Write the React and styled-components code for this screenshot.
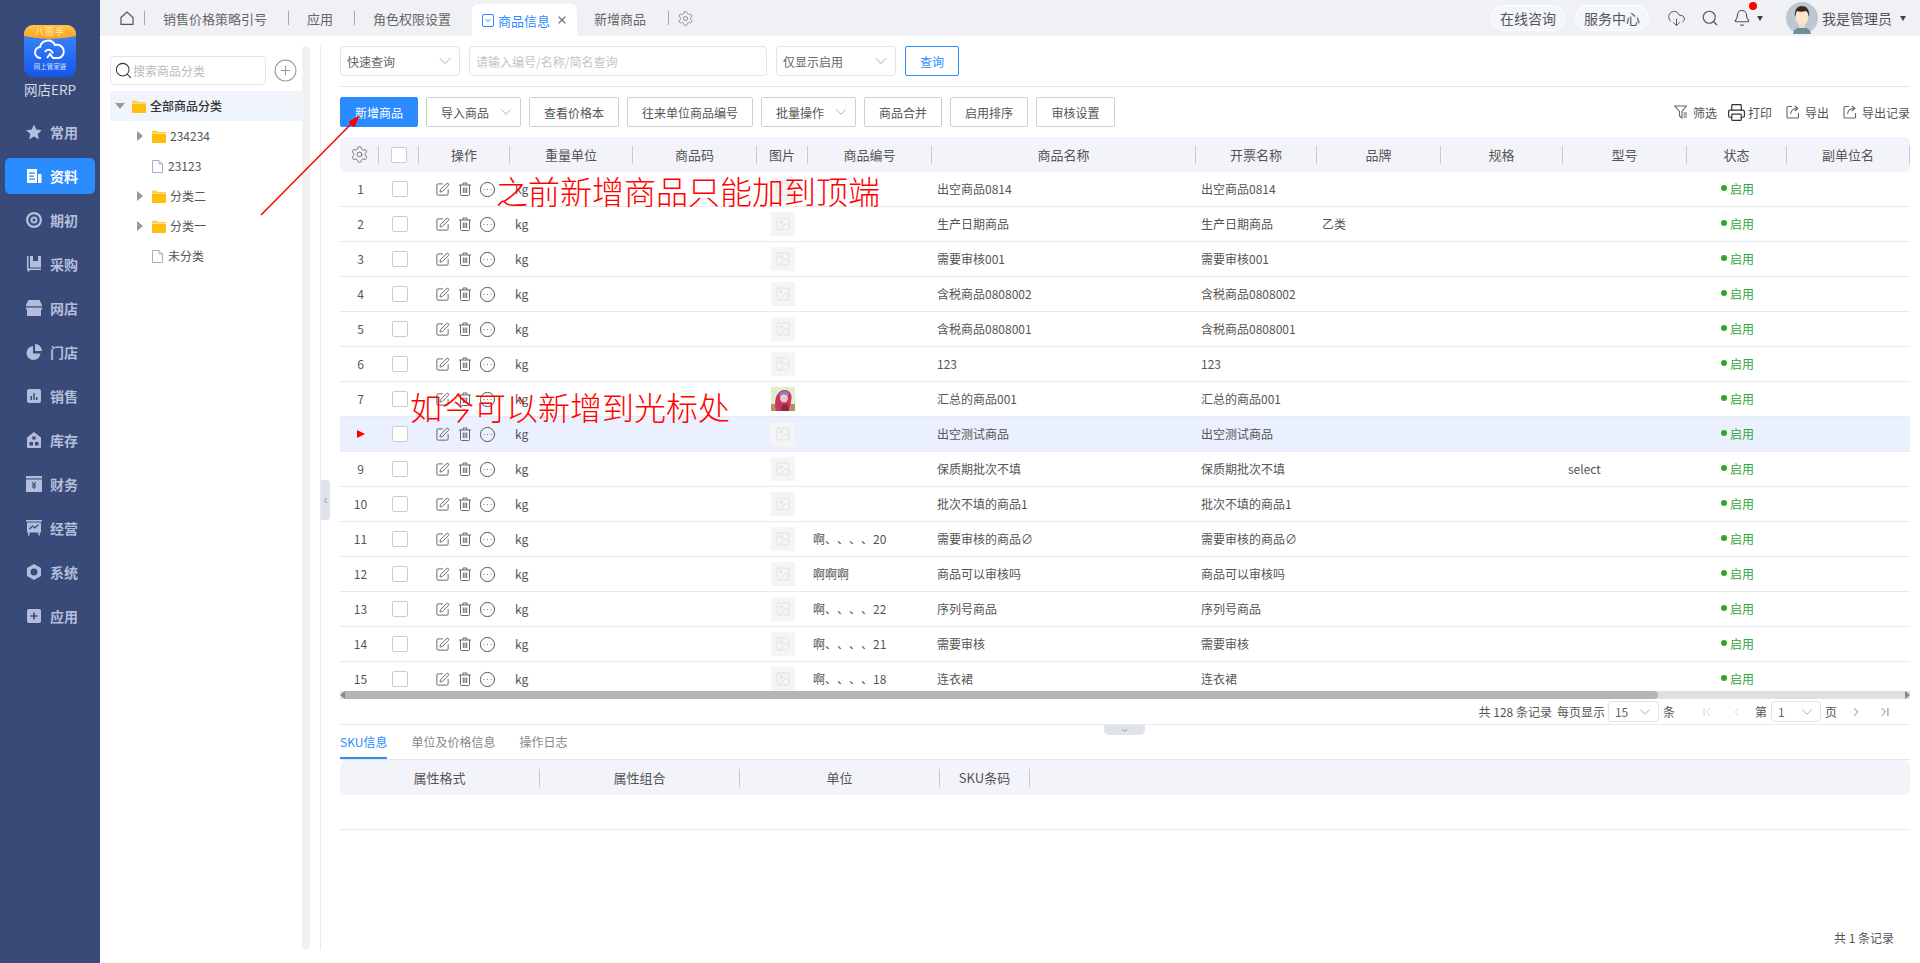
import styled, { createGlobalStyle } from 'styled-components'
import {
  Settings, SquarePen, CircleEllipsis, ChevronDown, Search, CirclePlus, CloudDownload, Bell,
  Printer, X, Image as ImageIcon, ChevronFirst, ChevronLast, ChevronLeft, ChevronRight,
} from 'lucide-react'

const GlobalStyle = createGlobalStyle`
  html, body {
    margin: 0;
    height: 100%;
    font-family: "Noto Sans CJK SC", "Liberation Sans", sans-serif;
    font-size: 12px;
    color: #555;
    background: #fff;
    text-spacing-trim: space-all;
  }
  * { box-sizing: border-box; }
`

const COLUMNS = '39px 40px 91px 123px 124px 51px 124px 264px 121px 124px 122px 124px 100px 123px'

const Page = styled.div`
  position: relative;
  display: flex;
  width: 1920px;
  height: 963px;
  overflow: hidden;
`

/* ---------- left navigation ---------- */

const Sidebar = styled.aside`
  width: 100px;
  flex: none;
  display: flex;
  flex-direction: column;
  align-items: center;
  padding-top: 25px;
  background: #384a77;
`

const LogoMark = styled.svg`
  width: 52px;
  height: 52px;
  display: block;
`

const LogoLabel = styled.div`
  margin: 3px 0 16px;
  height: 18px;
  line-height: 18px;
  font-size: 13.5px;
  color: #d5daea;
`

const NavList = styled.nav`
  display: flex;
  flex-direction: column;
  gap: 8px;
  width: 90px;
`

const NavItem = styled.a`
  display: flex;
  align-items: center;
  gap: 8px;
  height: 36px;
  padding-left: 21px;
  border-radius: 5px;
  font-size: 14px;
  font-weight: 700;
  color: ${(props) => (props.$active ? '#fff' : '#b3bddc')};
  background: ${(props) => (props.$active ? '#2b8cff' : 'transparent')};
`

const NavGlyph = styled.svg`
  width: 16px;
  height: 16px;
  flex: none;
  fill: currentColor;
`

const navIcons = {
  star: <polygon points="8,0.5 10.3,5.6 15.8,6.2 11.7,9.9 12.9,15.4 8,12.6 3.1,15.4 4.3,9.9 0.2,6.2 5.7,5.6" />,
  doc: (
    <>
      <path fillRule="evenodd" d="M1 1h10v14H2a1 1 0 0 1-1-1zM3 4.5v1.2h6V4.5zM3 7.5v1.2h5V7.5zM3 10.5v1.2h6v-1.2z" />
      <rect x="12" y="6" width="3.5" height="9" rx=".6" />
    </>
  ),
  target: <path fillRule="evenodd" d="M8 0a8 8 0 1 1 0 16A8 8 0 0 1 8 0zm0 2.2a5.8 5.8 0 1 0 0 11.6A5.8 5.8 0 0 0 8 2.2zM8 4.5a3.5 3.5 0 1 1 0 7 3.5 3.5 0 0 1 0-7zm0 2a1.5 1.5 0 1 0 0 3 1.5 1.5 0 0 0 0-3z" />,
  box: <path fillRule="evenodd" d="M1 0h1.5v12.5H15V14H3.5v1.6H1.6V14H1zM4 0h11v11.5H4zM7 0v5h5V0z" />,
  store: <path fillRule="evenodd" d="M2.5 0h11L16 5v1.3H0V5zM0 7.6h16v1.2a2 2 0 0 1-1 1.2V16H1v-6a2 2 0 0 1-1-1.2z" />,
  pie: (
    <>
      <path d="M7 2v7.5h7.5A7 7 0 1 1 7 2z" />
      <path d="M9 0a7 7 0 0 1 7 7H9z" />
    </>
  ),
  chart: <path fillRule="evenodd" d="M3 1h10a2 2 0 0 1 2 2v10a2 2 0 0 1-2 2H3a2 2 0 0 1-2-2V3a2 2 0 0 1 2-2zm1.5 7v4H6V8zm2.8-3v7h1.4V5zM10 9v3h1.5V9z" />,
  house: <path fillRule="evenodd" d="M8 0l7 5.5V15a1 1 0 0 1-1 1H2a1 1 0 0 1-1-1V5.5zM6.3 4.5v3h3.4v-3zM3.5 10v3.5H7V10zM9 10v3.5h3.5V10z" />,
  money: (
    <>
      <rect x="0" y="0" width="16" height="2.4" />
      <path fillRule="evenodd" d="M0 3.5h16V16H0zM5.5 6l2 2.6H6v1h1.5v.8H6v1h1.5V13h1v-1.6H10v-1H8.5v-.8H10v-1H8.5l2-2.6H9.3L8 7.8 6.7 6z" />
    </>
  ),
  board: (
    <>
      <rect x="0" y="0" width="16" height="1.6" />
      <path fillRule="evenodd" d="M1 2.4h14v10.2h-1.4l.6 2.7-1.4.4-.8-3.1H4l-.8 3.1-1.4-.4.6-2.7H1zm2 6.2l.9.9 2.6-2.7 2.2 1.9 4.2-3.7-.8-.9-3.4 3-2.3-1.9z" />
    </>
  ),
  hex: <path fillRule="evenodd" d="M8 0l7 4v8l-7 4-7-4V4zm0 4.5a3.5 3.5 0 1 0 0 7 3.5 3.5 0 0 0 0-7z" />,
  plus: <path fillRule="evenodd" d="M3 1h10a2 2 0 0 1 2 2v10a2 2 0 0 1-2 2H3a2 2 0 0 1-2-2V3a2 2 0 0 1 2-2zm4.2 3.5v2.7H4.5v1.6h2.7v2.7h1.6V8.8h2.7V7.2H8.8V4.5z" />,
}

const navItems = [
  ['star', '常用'], ['doc', '资料', true], ['target', '期初'], ['box', '采购'], ['store', '网店'], ['pie', '门店'],
  ['chart', '销售'], ['house', '库存'], ['money', '财务'], ['board', '经营'], ['hex', '系统'], ['plus', '应用'],
]

const Logo = () => (
  <LogoMark viewBox="0 0 52 52">
    <defs>
      <linearGradient id="logoBlue" x1="0" y1="0" x2="0" y2="1">
        <stop offset="0" stopColor="#3f8dff" />
        <stop offset="1" stopColor="#1656ea" />
      </linearGradient>
      <linearGradient id="logoGold" x1="0" y1="0" x2="0" y2="1">
        <stop offset="0" stopColor="#ffc548" />
        <stop offset="1" stopColor="#ff9f1a" />
      </linearGradient>
    </defs>
    <rect width="52" height="52" rx="9" fill="url(#logoBlue)" />
    <path d="M0 9a9 9 0 0 1 9-9h34a9 9 0 0 1 9 9v2q-26 6-52 0z" fill="url(#logoGold)" />
    <text x="26" y="10" textAnchor="middle" fontSize="9" fill="#ffe9b8" letterSpacing="1">八面手</text>
    <path
      d="M17 33a5.500 5.500 0 0 1 -1-11 8 8 0 0 1 15-2 6.500 6.500 0 0 1 4 13H29l-3-4 -3 4"
      fill="none"
      stroke="#fff"
      strokeWidth="2"
    />
    <path d="M21 27a4 4 0 0 1 6.500-1l1.500 2.500" fill="none" stroke="#fff" strokeWidth="1.800" />
    <text x="26" y="44" textAnchor="middle" fontSize="6.500" fill="#cfe0ff">网上管家婆</text>
  </LogoMark>
)

/* ---------- top tabs ---------- */

const Column = styled.div`
  flex: 1;
  min-width: 0;
  display: flex;
  flex-direction: column;
`

const TopBar = styled.header`
  height: 36px;
  flex: none;
  display: flex;
  align-items: flex-end;
  padding-left: 20px;
  background: #f0f1f5;
`

const TopRow = styled.div`
  height: 36px;
  display: flex;
  align-items: center;
`

const TabLink = styled.span`
  padding: ${(props) => props.$pad || '0 21px 0 18px'};
  font-size: 13px;
  color: #666;
  white-space: nowrap;
`

const TabDivider = styled.i`
  width: 1px;
  height: 14px;
  background: #a9a9a9;
`

const HomeIcon = styled.svg`
  width: 14px;
  height: 14px;
  margin-right: 10px;
  fill: none;
  stroke: #555;
  stroke-width: 1.2;
`

const ActiveTab = styled.div`
  width: 105px;
  height: 32px;
  flex: none;
  display: flex;
  align-items: center;
  align-self: flex-end;
  padding-left: 10px;
  border-radius: 6px 6px 0 0;
  font-size: 13px;
  color: #2b8cff;
  background: #fff;
  svg:first-child {
    margin-right: 4px;
  }
  svg:last-child {
    margin-left: 6px;
    color: #777;
  }
`

const TabGlyph = styled.svg`
  width: 12px;
  height: 13px;
  flex: none;
  fill: none;
  stroke: #2b8cff;
  stroke-width: 1;
`

const TopRight = styled.div`
  height: 36px;
  margin-left: auto;
  padding-right: 14px;
  display: flex;
  align-items: center;
  color: #555;
`

const Pill = styled.span`
  width: 74px;
  height: 26px;
  margin-right: 10px;
  display: flex;
  align-items: center;
  justify-content: center;
  border: 1px solid #fff;
  border-radius: 13px;
  font-size: 14px;
  color: #555;
  background: #f3f6fc;
`

const BellWrap = styled.span`
  position: relative;
  display: flex;
  margin: 0 6px 0 14px;
`

const RedDot = styled.i`
  position: absolute;
  top: -7px;
  right: -6px;
  width: 8px;
  height: 8px;
  border-radius: 50%;
  background: #f00;
`

const Caret = styled.i`
  width: 0;
  height: 0;
  border-left: 3.5px solid transparent;
  border-right: 3.5px solid transparent;
  border-top: 5px solid #444;
`

const AdminName = styled.span`
  margin: 0 8px 0 4px;
  font-size: 14px;
  color: #555;
`

const Avatar = () => (
  <svg width="32" height="32" viewBox="0 0 32 32" style={{ marginLeft: 23, flex: 'none' }}>
    <circle cx="16" cy="16" r="16" fill="#bcc7d4" />
    <path d="M7 32a9 7 0 0 1 18 0z" fill="#6f8d94" />
    <rect x="13" y="20" width="6" height="6" fill="#f8d9bd" />
    <ellipse cx="16" cy="15" rx="6.500" ry="8.500" fill="#fbe3cd" />
    <path d="M9 15c-1-8 3-11 7-11s8 3 7 11c-1-3-1-5-3-6-3 1-7 1-9 0-1 1-1 3-2 6z" fill="#3a2a20" />
  </svg>
)

/* ---------- category tree ---------- */

const Body = styled.div`
  flex: 1;
  min-height: 0;
  display: flex;
`

const TreeColumn = styled.section`
  width: 192px;
  flex: none;
  margin-left: 10px;
  padding-top: 20px;
`

const TreeScroll = styled.div`
  width: 8px;
  flex: none;
  margin: 10px 0 13px;
  border-radius: 4px;
  background: #f2f2f2;
`

const Splitter = styled.div`
  width: 20px;
  flex: none;
  margin: 10px 0 13px 10px;
  padding-top: 4px;
  display: flex;
  align-items: center;
  border-left: 1px solid #e8eaf2;
`

const SplitterHandle = styled.div`
  width: 9px;
  height: 40px;
  display: flex;
  align-items: center;
  justify-content: center;
  border-radius: 0 3px 3px 0;
  color: #777;
  background: #dfe3ea;
`

const TreeSearchRow = styled.div`
  display: flex;
  align-items: center;
  gap: 7px;
  margin-bottom: 6px;
`

const TreeSearch = styled.div`
  width: 156px;
  height: 29px;
  display: flex;
  align-items: center;
  padding-left: 3px;
  border: 1px solid #e2e4ea;
  border-radius: 4px;
  color: #bbb;
`

const TreeRow = styled.div`
  height: 30px;
  display: flex;
  align-items: center;
  padding-left: ${(props) => props.$indent}px;
  font-weight: ${(props) => (props.$root ? 500 : 400)};
  color: ${(props) => (props.$root ? '#333' : '#555')};
  background: ${(props) => (props.$root ? '#f0f5fc' : 'transparent')};
`

const TriangleDown = styled.i`
  width: 0;
  height: 0;
  margin-right: 7px;
  border-left: 5px solid transparent;
  border-right: 5px solid transparent;
  border-top: 6px solid #999;
`

const TriangleRight = styled.i`
  width: 0;
  height: 0;
  margin-right: 9px;
  border-top: 5px solid transparent;
  border-bottom: 5px solid transparent;
  border-left: 6px solid #999;
`

const TreeLabel = styled.span`
  margin-left: ${(props) => props.$gap || 4}px;
  padding-bottom: 2px;
`

const FolderIcon = () => (
  <svg width="14" height="13" viewBox="0 0 14 13">
    <path d="M0 1.500A1 1 0 0 1 1 .5h3.500l1.300 1.500H13a1 1 0 0 1 1 1V3H0z" fill="#ffcf4a" />
    <path d="M0 3.500h14V12a1 1 0 0 1-1 1H1a1 1 0 0 1-1-1z" fill="#ffbe0b" />
  </svg>
)

const FileIcon = () => (
  <svg width="11" height="13" viewBox="0 0 11 13" fill="none" stroke="#9fb0c8">
    <path d="M.5.500h6.500l3.500 3.500v8.500H.5zM7 .5V4h3.500" />
  </svg>
)

/* ---------- right content ---------- */

const Main = styled.main`
  width: 1570px;
  flex: none;
  display: flex;
  flex-direction: column;
  padding-top: 10px;
`

const QueryRow = styled.div`
  height: 30px;
  display: flex;
  gap: 9px;
`

const SelectBox = styled.div`
  width: ${(props) => props.$w}px;
  height: ${(props) => props.$h || 30}px;
  flex: none;
  display: flex;
  align-items: center;
  justify-content: space-between;
  padding: 0 4px 0 6px;
  border: 1px solid #e2e4ea;
  border-radius: 4px;
  color: #666;
  svg {
    color: #999;
  }
`

const QueryInput = styled.div`
  width: 298px;
  height: 30px;
  display: flex;
  align-items: center;
  padding-left: 6px;
  border: 1px solid #e2e4ea;
  border-radius: 4px;
  color: #c4c4c4;
`

const QueryButton = styled.button`
  width: 54px;
  height: 30px;
  padding: 0;
  border: 1px solid #2b8cff;
  border-radius: 2px;
  font: inherit;
  color: #2b8cff;
  background: #fff;
`

const Rule = styled.hr`
  width: 100%;
  height: 1px;
  margin: 10px 0;
  border: 0;
  flex: none;
  background: #e6e6f0;
`

const ActionRow = styled.div`
  height: 30px;
  flex: none;
  display: flex;
  align-items: center;
  gap: 8px;
`

const ActionButton = styled.button`
  width: ${(props) => props.$w}px;
  height: 30px;
  flex: none;
  display: flex;
  align-items: center;
  justify-content: ${(props) => (props.$menu ? 'space-between' : 'center')};
  padding: ${(props) => (props.$menu ? '0 5px 0 14px' : '0')};
  border: 1px solid ${(props) => (props.$primary ? '#2b8cff' : '#cfcfcf')};
  border-radius: 2px;
  font: inherit;
  color: ${(props) => (props.$primary ? '#fff' : '#555')};
  background: ${(props) => (props.$primary ? '#2b8cff' : '#fff')};
  svg {
    color: #999;
  }
`

const ToolLinks = styled.div`
  margin-left: auto;
  display: flex;
  align-items: center;
  gap: 14px;
`

const ToolLink = styled.span`
  display: flex;
  align-items: center;
  gap: 5px;
  color: #555;
`

const PrintLink = styled(ToolLink)`
  gap: 2px;
  margin-left: -4px;
`

const LineIcon = styled.svg`
  width: 14px;
  height: 14px;
  flex: none;
  fill: none;
  stroke: ${(props) => props.$color || '#666'};
  stroke-width: 1.1;
`

const TrashGlyph = styled(LineIcon)`
  width: 12px;
  stroke-width: 1;
`

const FunnelIcon = () => (
  <LineIcon viewBox="0 0 14 14">
    <path d="M.7 1h11.600L8 6.500V13L5.500 11V6.500zM9.500 8H13M9.500 10H13M9.500 12H13" />
  </LineIcon>
)

const ExportIcon = () => (
  <LineIcon viewBox="0 0 14 14">
    <path d="M6 1.500H2A1 1 0 0 0 1 2.500v9.500a1 1 0 0 0 1 1h9.500a1 1 0 0 0 1-1V8" />
    <path d="M4.500 9C5 5.500 7.500 3.500 11 3.500M8.800 1l3 2.500-3 2.500" />
  </LineIcon>
)

const TrashIcon = () => (
  <TrashGlyph viewBox="0 0 12 14">
    <path d="M0 3h12M4 3V1h4v2M1.500 3v9.500a1 1 0 0 0 1 1h7a1 1 0 0 0 1-1V3M4.300 5.500v5.500M6 5.500v5.500M7.700 5.500v5.500" />
  </TrashGlyph>
)

const TableView = styled.div`
  height: 554px;
  flex: none;
  margin-top: 10px;
  overflow: hidden;
`

const HeaderRow = styled.div`
  height: 35px;
  display: grid;
  grid-template-columns: ${COLUMNS};
  align-items: center;
  border-radius: 6px;
  font-size: 13px;
  color: #555;
  background: #f3f4f9;
`

const HeaderCell = styled.div`
  height: 18px;
  display: flex;
  align-items: center;
  justify-content: center;
  border-right: 1px solid #c6c8dd;
`

const Checkbox = styled.span`
  display: block;
  width: 16px;
  height: 16px;
  border: 1px solid #ccc;
  border-radius: 2px;
  background: #fff;
`

const Row = styled.div`
  height: 35px;
  display: grid;
  grid-template-columns: ${COLUMNS};
  align-items: center;
  border-bottom: 1px solid #e8e9f1;
  background: ${(props) => (props.$active ? '#eaf0fd' : '#fff')};
`

const Cell = styled.div`
  padding: 0 0 2px 5px;
  white-space: nowrap;
  color: #555;
`

const IndexCell = styled.div`
  display: flex;
  justify-content: center;
  padding: 0 0 1px 2px;
`

const CheckCell = styled.div`
  display: flex;
  justify-content: center;
  padding-left: 2px;
`

const OpCell = styled.div`
  display: flex;
  align-items: center;
  gap: 8.5px;
  padding-left: 16px;
`

const PicCell = styled.div`
  display: flex;
  justify-content: center;
`

const PicSlot = styled.span`
  width: 24px;
  height: 24px;
  display: flex;
  align-items: center;
  justify-content: center;
  color: #dcdcdc;
  background: #f5f5f5;
`

const StatusCell = styled.div`
  display: flex;
  align-items: center;
  gap: 3px;
  padding: 0 0 2px 34px;
  color: #2ea83a;
`

const Dot = styled.i`
  width: 6px;
  height: 6px;
  border-radius: 50%;
  background: #2ea52e;
`

const RowMarker = styled.i`
  width: 0;
  height: 0;
  border-top: 4px solid transparent;
  border-bottom: 4px solid transparent;
  border-left: 8px solid #f00;
`

const Photo = () => (
  <svg width="24" height="24" viewBox="0 0 24 24">
    <rect width="24" height="24" fill="#dfeecb" />
    <rect y="17" width="24" height="7" fill="#b2925f" />
    <path d="M5 24c-2-8-1-19 7-21 7-1 10 5 8 11l-1 6-3 4z" fill="#c8345f" />
    <ellipse cx="13" cy="11" rx="4" ry="4.500" fill="#e4cbc8" />
    <path d="M7.500 7c3-4 9-4 11 0l-1.500 2c-2.500-2-6-2-8 0z" fill="#8c7cc0" />
    <path d="M10 24c0-4 1-7 4-7s4 3 4 7z" fill="#8c2a3c" />
  </svg>
)

const ScrollTrack = styled.div`
  height: 8px;
  flex: none;
  display: flex;
  align-items: stretch;
  background: #e0e0e0;
`

const ScrollThumb = styled.div`
  width: 1313px;
  border-radius: 0 4px 4px 0;
  background: #b5b5b5;
`

const ScrollArrow = styled.i`
  width: 0;
  height: 0;
  margin-left: ${(props) => (props.$end ? 'auto' : '0')};
  border-top: 4px solid transparent;
  border-bottom: 4px solid transparent;
  border-left: ${(props) => (props.$end ? '5px solid #888' : '0')};
  border-right: ${(props) => (props.$end ? '0' : '5px solid #888')};
`

const Pager = styled.div`
  height: 26px;
  flex: none;
  display: flex;
  align-items: center;
  padding-right: 18px;
  justify-content: flex-end;
  border-bottom: 1px solid #e8e9f1;
  color: #555;
`

const PagerText = styled.span`
  margin: ${(props) => props.$m || '0 3px'};
  white-space: nowrap;
`

const PagerIcon = styled.span`
  display: flex;
  margin: ${(props) => props.$m};
  color: ${(props) => (props.$off ? '#c4c4c4' : '#555')};
`

const DetailTabs = styled.div`
  position: relative;
  height: 35px;
  flex: none;
  display: flex;
  gap: 24px;
  border-bottom: 1px solid #e6e6ea;
`

const DetailTab = styled.span`
  height: 34px;
  display: flex;
  align-items: center;
  border-bottom: 2px solid ${(props) => (props.$active ? '#2b8cff' : 'transparent')};
  color: ${(props) => (props.$active ? '#2b8cff' : '#888')};
`

const CollapseTab = styled.div`
  position: absolute;
  top: 0;
  left: 764px;
  width: 41px;
  height: 10px;
  display: flex;
  align-items: center;
  justify-content: center;
  border-radius: 0 0 5px 5px;
  color: #777;
  background: #dfe3ea;
`

const SkuHeader = styled.div`
  height: 35px;
  flex: none;
  display: grid;
  grid-template-columns: 200px 200px 200px 90px;
  align-items: center;
  border-radius: 6px;
  font-size: 13px;
  color: #555;
  background: #f3f4f9;
`

const SkuEmpty = styled.div`
  height: 35px;
  flex: none;
  border-bottom: 1px solid #e8e9f1;
`

const Footer = styled.div`
  padding: 99px 16px 0 0;
  line-height: 18px;
  text-align: right;
  color: #555;
`

/* ---------- red notes drawn over the screenshot ---------- */

const Note = styled.div`
  position: absolute;
  left: ${(props) => props.$x}px;
  top: ${(props) => props.$y}px;
  font-size: 32px;
  font-weight: 300;
  line-height: 44px;
  white-space: nowrap;
  color: #f00;
  pointer-events: none;
`

const Arrow = styled.svg`
  position: absolute;
  left: 255px;
  top: 105px;
  width: 115px;
  height: 115px;
  pointer-events: none;
`

const tabs = ['销售价格策略引号', '应用', '角色权限设置']

const buttons = [
  { label: '新增商品', w: 78, primary: true },
  { label: '导入商品', w: 95, menu: true },
  { label: '查看价格本', w: 90 },
  { label: '往来单位商品编号', w: 126 },
  { label: '批量操作', w: 95, menu: true },
  { label: '商品合并', w: 78 },
  { label: '启用排序', w: 78 },
  { label: '审核设置', w: 79 },
]

const headers = ['操作', '重量单位', '商品码', '图片', '商品编号', '商品名称', '开票名称', '品牌', '规格', '型号', '状态', '副单位名']

const rows = [
  { name: '出空商品0814' },
  { name: '生产日期商品', brand: '乙类' },
  { name: '需要审核001' },
  { name: '含税商品0808002' },
  { name: '含税商品0808001' },
  { name: '123' },
  { name: '汇总的商品001', photo: true },
  { name: '出空测试商品', active: true },
  { name: '保质期批次不填', model: 'select' },
  { name: '批次不填的商品1' },
  { name: '需要审核的商品∅', code: '啊、、、、20' },
  { name: '商品可以审核吗', code: '啊啊啊' },
  { name: '序列号商品', code: '啊、、、、22' },
  { name: '需要审核', code: '啊、、、、21' },
  { name: '连衣裙', code: '啊、、、、18' },
]

const treeItems = [
  { label: '234234', folder: true },
  { label: '23123' },
  { label: '分类二', folder: true },
  { label: '分类一', folder: true },
  { label: '未分类' },
]

const App = () => {
  return (
    <Page>
      <GlobalStyle />
      <Sidebar>
        <Logo />
        <LogoLabel>网店ERP</LogoLabel>
        <NavList>
          {navItems.map(([icon, label, active]) => (
            <NavItem key={label} $active={active}>
              <NavGlyph viewBox="0 0 16 16">{navIcons[icon]}</NavGlyph>
              {label}
            </NavItem>
          ))}
        </NavList>
      </Sidebar>

      <Column>
        <TopBar>
          <TopRow>
            <HomeIcon viewBox="0 0 14 14">
              <path d="M1 6.500L7 1l6 5.500V13.300H1z" />
            </HomeIcon>
            <TabDivider />
            {tabs.map((tab, i) => (
              <TopRow key={tab}>
                <TabLink>{tab}</TabLink>
                {i < tabs.length - 1 && <TabDivider />}
              </TopRow>
            ))}
            <ActiveTab>
              <TabGlyph viewBox="0 0 12 13">
                <rect x=".5" y=".5" width="11" height="12" rx="1.500" />
                <path d="M3.500 5L6 7.500 8.500 5" />
              </TabGlyph>
              商品信息
              <X size={12} strokeWidth={2.5} />
            </ActiveTab>
            <TabLink $pad="0 22px 0 17px">新增商品</TabLink>
            <TabDivider />
            <Settings size={17} strokeWidth={1.1} color="#777" style={{ marginLeft: 8 }} />
          </TopRow>
          <TopRight>
            <Pill>在线咨询</Pill>
            <Pill>服务中心</Pill>
            <CloudDownload size={19} strokeWidth={1.2} style={{ marginLeft: 8, marginRight: 15 }} />
            <Search size={18} strokeWidth={1.5} />
            <BellWrap>
              <Bell size={18} strokeWidth={1.5} />
              <RedDot />
            </BellWrap>
            <Caret />
            <Avatar />
            <AdminName>我是管理员</AdminName>
            <Caret />
          </TopRight>
        </TopBar>

        <Body>
          <TreeColumn>
            <TreeSearchRow>
              <TreeSearch>
                <Search size={19} color="#333" strokeWidth={1.3} />
                搜索商品分类
              </TreeSearch>
              <CirclePlus size={25} color="#999" strokeWidth={1} />
            </TreeSearchRow>
            <TreeRow $root $indent={5}>
              <TriangleDown />
              <FolderIcon />
              <TreeLabel>全部商品分类</TreeLabel>
            </TreeRow>
            {treeItems.map((item) =>
              item.folder ? (
                <TreeRow key={item.label} $indent={27}>
                  <TriangleRight />
                  <FolderIcon />
                  <TreeLabel>{item.label}</TreeLabel>
                </TreeRow>
              ) : (
                <TreeRow key={item.label} $indent={42}>
                  <FileIcon />
                  <TreeLabel $gap={5}>{item.label}</TreeLabel>
                </TreeRow>
              ),
            )}
          </TreeColumn>
          <TreeScroll />
          <Splitter>
            <SplitterHandle>
              <ChevronLeft size={9} strokeWidth={2} />
            </SplitterHandle>
          </Splitter>

          <Main>
            <QueryRow>
              <SelectBox $w={120}>
                快速查询
                <ChevronDown size={20} strokeWidth={1} />
              </SelectBox>
              <QueryInput>请输入编号/名称/简名查询</QueryInput>
              <SelectBox $w={120}>
                仅显示启用
                <ChevronDown size={20} strokeWidth={1} />
              </SelectBox>
              <QueryButton>查询</QueryButton>
            </QueryRow>
            <Rule />
            <ActionRow>
              {buttons.map((button) => (
                <ActionButton key={button.label} $w={button.w} $primary={button.primary} $menu={button.menu}>
                  {button.label}
                  {button.menu && <ChevronDown size={18} strokeWidth={1} />}
                </ActionButton>
              ))}
              <ToolLinks>
                <ToolLink>
                  <FunnelIcon />
                  筛选
                </ToolLink>
                <PrintLink>
                  <Printer size={19} strokeWidth={1.5} color="#333" />
                  打印
                </PrintLink>
                <ToolLink>
                  <ExportIcon />
                  导出
                </ToolLink>
                <ToolLink>
                  <ExportIcon />
                  导出记录
                </ToolLink>
              </ToolLinks>
            </ActionRow>

            <TableView>
              <HeaderRow>
                <HeaderCell>
                  <Settings size={19} strokeWidth={1.1} color="#666" />
                </HeaderCell>
                <HeaderCell>
                  <Checkbox />
                </HeaderCell>
                {headers.map((label) => (
                  <HeaderCell key={label}>{label}</HeaderCell>
                ))}
              </HeaderRow>
              {rows.map((row, i) => (
                <Row key={row.name} $active={row.active}>
                  <IndexCell>{row.active ? <RowMarker /> : i + 1}</IndexCell>
                  <CheckCell>
                    <Checkbox />
                  </CheckCell>
                  <OpCell>
                    <SquarePen size={15} strokeWidth={1.4} color="#555" />
                    <TrashIcon />
                    <CircleEllipsis size={17} strokeWidth={1.4} color="#555" />
                  </OpCell>
                  <Cell>kg</Cell>
                  <Cell />
                  <PicCell>
                    {row.photo ? (
                      <Photo />
                    ) : (
                      <PicSlot>
                        <ImageIcon size={16} strokeWidth={1.2} />
                      </PicSlot>
                    )}
                  </PicCell>
                  <Cell>{row.code}</Cell>
                  <Cell>{row.name}</Cell>
                  <Cell>{row.name}</Cell>
                  <Cell>{row.brand}</Cell>
                  <Cell />
                  <Cell>{row.model}</Cell>
                  <StatusCell>
                    <Dot />
                    启用
                  </StatusCell>
                  <Cell />
                </Row>
              ))}
            </TableView>

            <ScrollTrack>
              <ScrollArrow />
              <ScrollThumb />
              <ScrollArrow $end />
            </ScrollTrack>

            <Pager>
              <PagerText $m="0 2px 0 0">共 128 条记录</PagerText>
              <PagerText>每页显示</PagerText>
              <SelectBox $w={51} $h={21}>
                15
                <ChevronDown size={18} strokeWidth={1} />
              </SelectBox>
              <PagerText $m="0 25px 0 4px">条</PagerText>
              <PagerIcon $off $m="0 16px 0 0">
                <ChevronFirst size={14} strokeWidth={1.3} />
              </PagerIcon>
              <PagerIcon $off $m="0 11px 0 0">
                <ChevronLeft size={14} strokeWidth={1.3} />
              </PagerIcon>
              <PagerText $m="0 4px 0 0">第</PagerText>
              <SelectBox $w={50} $h={21}>
                1
                <ChevronDown size={18} strokeWidth={1} />
              </SelectBox>
              <PagerText $m="0 12px 0 4px">页</PagerText>
              <PagerIcon $m="0 15px 0 0">
                <ChevronRight size={14} strokeWidth={1.3} />
              </PagerIcon>
              <PagerIcon>
                <ChevronLast size={14} strokeWidth={1.3} />
              </PagerIcon>
            </Pager>

            <DetailTabs>
              <DetailTab $active>SKU信息</DetailTab>
              <DetailTab>单位及价格信息</DetailTab>
              <DetailTab>操作日志</DetailTab>
              <CollapseTab>
                <ChevronDown size={9} strokeWidth={2} />
              </CollapseTab>
            </DetailTabs>
            <SkuHeader>
              <HeaderCell>属性格式</HeaderCell>
              <HeaderCell>属性组合</HeaderCell>
              <HeaderCell>单位</HeaderCell>
              <HeaderCell>SKU条码</HeaderCell>
            </SkuHeader>
            <SkuEmpty />
            <Footer>共 1 条记录</Footer>
          </Main>
        </Body>
      </Column>

      <Note $x={496} $y={168}>之前新增商品只能加到顶端</Note>
      <Note $x={410} $y={384}>如今可以新增到光标处</Note>
      <Arrow viewBox="0 0 115 115">
        <path d="M6 110L98 17" stroke="#f00" strokeWidth="1.500" fill="none" />
        <path d="M104 11L94 17L99 22z" fill="#f00" stroke="#f00" />
      </Arrow>
    </Page>
  )
}

export default App
